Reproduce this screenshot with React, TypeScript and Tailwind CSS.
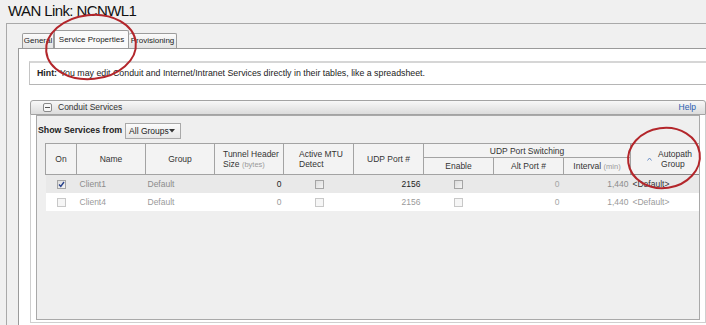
import React from "react"

const cellHead = "border border-[#a3a3a3] text-[8.5px] leading-[10px] text-[#333] font-normal"

function Check({ checked = false, dim = false }: { checked?: boolean; dim?: boolean }) {
  return (
    <span
      className={`inline-flex items-center justify-center w-[9px] h-[9px] border align-middle ${
        dim ? "border-[#c8c8c8] bg-[#f6f6f6]" : "border-[#a5a5a5] bg-gradient-to-br from-[#dcdcdc] to-[#f4f4f4]"
      }`}
    >
      {checked && (
        <svg width="7" height="7" viewBox="0 0 7 7">
          <path d="M1 3.5 L2.8 5.5 L6 1" fill="none" stroke="#27408b" strokeWidth="1.4" />
        </svg>
      )}
    </span>
  )
}

const rows = [
  { name: "Client1", on: true, bg: "bg-[#e9e9e9]", strong: "text-[#222]", soft: "text-[#8c8c8c]", dim: false },
  { name: "Client4", on: false, bg: "bg-white", strong: "text-[#9a9a9a]", soft: "text-[#9a9a9a]", dim: true },
]

export default function App() {
  return (
    <div className="relative w-[706px] h-[325px] overflow-hidden bg-[#f0f0f0] font-['Liberation_Sans',Arial,sans-serif] text-[#222]">
      {/* title */}
      <div className="h-[23px] pl-[8px] pt-[2px] text-[15px] leading-[18px] tracking-[-0.6px] text-[#111]">
        WAN Link: NCNWL1
      </div>

      {/* outer panel */}
      <div className="ml-[6px] h-[302px] border-l border-t border-[#a9a9a9] pl-[11px] pt-[6px] flex flex-col">
        {/* tabs */}
        <div className="flex items-end h-[18px] pl-[4px] shrink-0">
          <div className="w-[32px] h-[15px] border border-b-0 border-[#9c9c9c] rounded-t-[2px] bg-gradient-to-b from-[#fbfbfb] to-[#e4e4e4] flex items-center justify-center text-[8px] text-[#222]">
            General
          </div>
          <div className="w-[75px] h-[18px] border border-b-0 border-[#9c9c9c] rounded-t-[2px] bg-[#fafafa] flex items-center justify-center text-[8px] text-[#222]">
            Service Properties
          </div>
          <div className="w-[48px] h-[15px] border border-b-0 border-l-0 border-[#9c9c9c] rounded-t-[2px] bg-gradient-to-b from-[#fbfbfb] to-[#e4e4e4] flex items-center justify-center text-[8px] text-[#222]">
            Provisioning
          </div>
        </div>

        {/* tab panel */}
        <div className="flex-1 border-l border-t border-[#9a9a9a] bg-white pl-[10px] pt-[12px]">
          <div className="h-[24px] border-l border-l-[#c4c4c4] border-t-2 border-t-[#d6d6d6] border-b border-b-[#b5b5b5] flex items-center pl-[7px] text-[8.8px] text-[#222] whitespace-nowrap">
            <span className="font-bold">Hint:</span>
            <span className="ml-[3px]">
              You may edit Conduit and Internet/Intranet Services directly in their tables, like a spreadsheet.
            </span>
          </div>

          {/* conduit services */}
          <div className="mt-[15px] ml-[1px] w-[676px]">
            <div className="h-[15px] border border-[#a3a3a3] rounded-t-[3px] bg-gradient-to-b from-[#f8f8f8] to-[#dcdcdc] flex items-center pl-[12px] pr-[9px] text-[8.5px]">
              <span className="w-[9px] h-[9px] border border-[#8a8a8a] rounded-[2px] bg-[#f7f7f7] flex items-center justify-center">
                <span className="w-[5px] h-px bg-[#555]" />
              </span>
              <span className="ml-[6px] text-[#333]">Conduit Services</span>
              <span className="ml-auto text-[#2a5db0]">Help</span>
            </div>

            <div className="border-l border-r border-b border-[#cfcfcf] bg-white px-[5px] pb-[2px]">
              <div className="h-[205px] border border-[#a9a9a9] bg-[#efefef] pl-[1px] pt-[7px] overflow-hidden">
                <div className="flex items-center h-[16px]">
                  <span className="text-[8.8px] font-bold text-[#222]">Show Services from</span>
                  <div className="ml-[3px] w-[56px] h-[16px] border border-[#a9a9a9] bg-gradient-to-b from-[#fbfbfb] to-[#e6e6e6] flex items-center pl-[3px] pr-[5px] text-[8.5px] text-[#222]">
                    All Groups
                    <svg className="ml-auto" width="6" height="4" viewBox="0 0 6 4">
                      <path d="M0 0 H6 L3 3.5 Z" fill="#333" />
                    </svg>
                  </div>
                </div>

                <table className="mt-[4px] ml-[7px] w-[655px] table-fixed border-collapse">
                  <colgroup>
                    <col className="w-[31px]" />
                    <col className="w-[69px]" />
                    <col className="w-[69px]" />
                    <col className="w-[69px]" />
                    <col className="w-[70px]" />
                    <col className="w-[70px]" />
                    <col className="w-[70px]" />
                    <col className="w-[70px]" />
                    <col className="w-[67px]" />
                    <col className="w-[70px]" />
                  </colgroup>
                  <thead className="bg-[#f3f3f3]">
                    <tr className="h-[14px]">
                      <th rowSpan={2} className={`${cellHead} text-center`}>On</th>
                      <th rowSpan={2} className={`${cellHead} text-center`}>Name</th>
                      <th rowSpan={2} className={`${cellHead} text-center`}>Group</th>
                      <th rowSpan={2} className={`${cellHead} text-left pl-[8px]`}>
                        Tunnel Header
                        <br />
                        Size <span className="text-[#9a9a9a] text-[7.5px]">(bytes)</span>
                      </th>
                      <th rowSpan={2} className={`${cellHead} text-left pl-[15px]`}>
                        Active MTU
                        <br />
                        Detect
                      </th>
                      <th rowSpan={2} className={`${cellHead} text-center`}>UDP Port #</th>
                      <th colSpan={3} className={`${cellHead} text-center`}>UDP Port Switching</th>
                      <th rowSpan={2} className={`${cellHead} border-b-[#888]`}>
                        <div className="flex items-center pl-[16px]">
                          <svg width="5" height="4" viewBox="0 0 5 4">
                            <path d="M0.5 3.5 L2.5 1 L4.5 3.5" fill="none" stroke="#6b8fc7" strokeWidth="1" />
                          </svg>
                          <span className="ml-[6px] text-left">
                            Autopath
                            <br />
                            <span className="ml-[3px]">Group</span>
                          </span>
                        </div>
                      </th>
                    </tr>
                    <tr className="h-[17px]">
                      <th className={`${cellHead} text-center`}>Enable</th>
                      <th className={`${cellHead} text-center`}>Alt Port #</th>
                      <th className={`${cellHead} text-center`}>
                        Interval <span className="text-[#9a9a9a] text-[7.5px]">(min)</span>
                      </th>
                    </tr>
                  </thead>
                  <tbody className="text-[8.5px] leading-[10px]">
                    {rows.map((r) => (
                      <tr key={r.name} className={`h-[18px] ${r.bg}`}>
                        <td className="text-center">
                          <Check checked={r.on} dim={r.dim} />
                        </td>
                        <td className={`pl-[3px] ${r.soft}`}>{r.name}</td>
                        <td className={`pl-[2px] ${r.soft}`}>Default</td>
                        <td className={`text-right pr-[2px] ${r.strong}`}>0</td>
                        <td className="text-center pl-[1px]">
                          <Check dim={r.dim} />
                        </td>
                        <td className={`text-right pr-[3px] ${r.strong}`}>2156</td>
                        <td className="text-center pr-[1px]">
                          <Check dim={r.dim} />
                        </td>
                        <td className="text-right pr-[4px] text-[#a5a5a5]">0</td>
                        <td className={`text-right pr-[2px] ${r.soft}`}>1,440</td>
                        <td className={`pl-[2px] ${r.dim ? "text-[#9a9a9a]" : "text-[#333]"}`}>&lt;Default&gt;</td>
                      </tr>
                    ))}
                  </tbody>
                </table>
              </div>
            </div>
          </div>
        </div>
      </div>

      {/* red annotation circles */}
      <svg className="absolute inset-0 pointer-events-none" width="706" height="325" viewBox="0 0 706 325">
        <ellipse cx="91" cy="47" rx="45" ry="32" transform="rotate(-6 91 47)" fill="none" stroke="#b3262b" strokeWidth="2" />
        <ellipse cx="664" cy="158" rx="36" ry="30" transform="rotate(-8 664 158)" fill="none" stroke="#b3262b" strokeWidth="2" />
      </svg>
    </div>
  )
}
